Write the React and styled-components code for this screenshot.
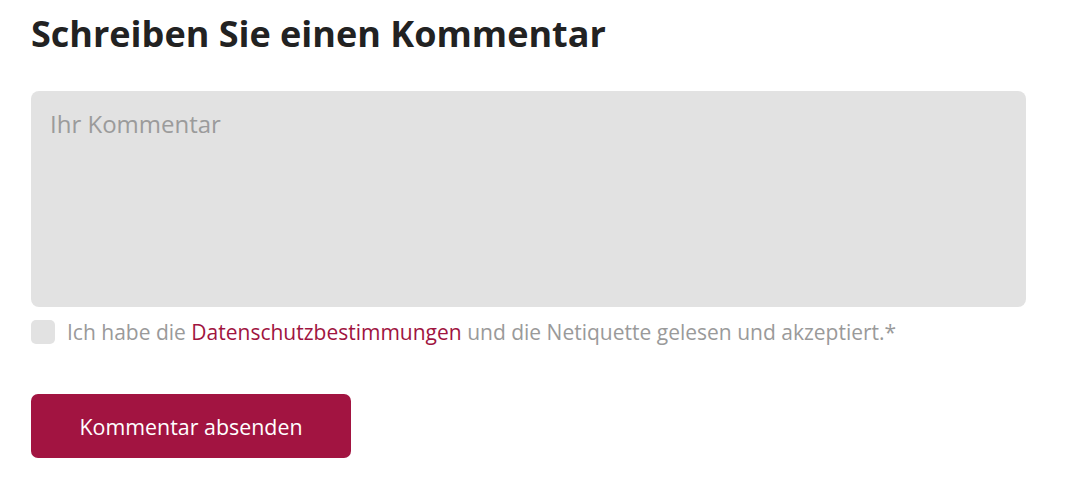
import React from 'react';
import styled, { createGlobalStyle } from 'styled-components';

const GlobalStyle = createGlobalStyle`
  body {
    margin: 0;
    background: #fff;
    font-family: "Open Sans", "Noto Sans", sans-serif;
  }
`;

const Wrapper = styled.div`
  padding: 8px 66px 0 31px;
  width: 995px;
`;

const Heading = styled.h2`
  margin: 0 0 31px;
  font-size: 36px;
  line-height: 52px;
  font-weight: 700;
  color: #222;
`;

const TextArea = styled.textarea`
  display: block;
  box-sizing: border-box;
  width: 995px;
  height: 216px;
  border: none;
  border-radius: 8px;
  background: #e2e2e2;
  padding: 17px 19px;
  font-family: inherit;
  font-size: 24px;
  line-height: 32px;
  resize: none;
  outline: none;

  &::placeholder {
    color: #9b9b9b;
  }
`;

const ConsentRow = styled.label`
  display: flex;
  align-items: center;
  gap: 12px;
  margin-top: 11px;
  font-size: 21px;
  line-height: 28px;
  color: #9a9a9a;
`;

const Box = styled.span`
  flex: none;
  width: 24px;
  height: 24px;
  border-radius: 5px;
  background: #e2e2e2;
`;

const Link = styled.a`
  color: #a0143f;
  text-decoration: none;
`;

const Submit = styled.button`
  margin-top: 48px;
  width: 320px;
  height: 64px;
  border: none;
  border-radius: 7px;
  background: #a21441;
  color: #fff;
  font-family: inherit;
  font-size: 21.4px;
  cursor: pointer;
`;

export default function App() {
  return (
    <Wrapper>
      <GlobalStyle />
      <Heading>Schreiben Sie einen Kommentar</Heading>
      <TextArea placeholder="Ihr Kommentar" />
      <ConsentRow>
        <Box />
        <span>
          Ich habe die <Link href="#">Datenschutzbestimmungen</Link> und die Netiquette gelesen und akzeptiert.*
        </span>
      </ConsentRow>
      <Submit type="button">Kommentar absenden</Submit>
    </Wrapper>
  );
}
